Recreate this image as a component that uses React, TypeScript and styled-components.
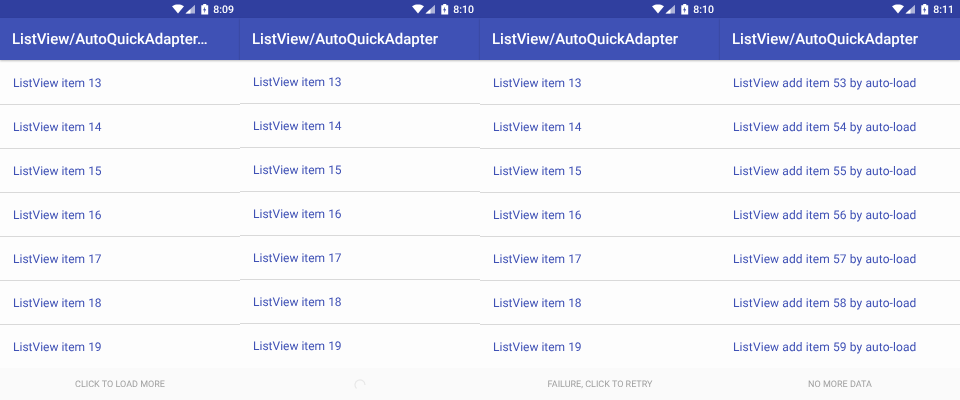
import React from "react";
import styled, { createGlobalStyle } from "styled-components";

const GlobalStyle = createGlobalStyle`
  html, body {
    margin: 0;
    padding: 0;
    background: #fafafa;
    font-family: Roboto, "Liberation Sans", sans-serif;
    text-rendering: geometricPrecision;
  }
`;

const Screens = styled.div`
  display: flex;
  width: 960px;
  height: 400px;
  overflow: hidden;
  will-change: transform;
`;

const Phone = styled.div`
  display: flex;
  flex-direction: column;
  width: 240px;
  height: 400px;
  background: #fdfdfd;
`;

const StatusBar = styled.div`
  display: flex;
  align-items: center;
  justify-content: flex-end;
  height: 18px;
  padding-right: 6px;
  box-sizing: border-box;
  background: #303f9f;
  color: #fff;
  font-size: 10.5px;
  font-weight: 500;
`;

const StatusIcons = styled.svg`
  width: 41px;
  height: 12px;
  margin-right: 1px;
  fill: #fff;
`;

const Toolbar = styled.div`
  display: flex;
  align-items: center;
  height: 42px;
  padding-left: 12px;
  flex-shrink: 0;
  position: relative;
  background: #3f51b5;
  color: #fff;
  font-size: 15px;
  font-weight: 500;
  box-shadow: 0 1px 2px rgba(0, 0, 0, 0.25);
  z-index: 1;
`;

const List = styled.div<{ $shift: number }>`
  display: flex;
  flex-direction: column;
  flex: 1;
  min-height: 0;
  overflow: hidden;
  padding-top: ${(p) => p.$shift}px;
`;

const Row = styled.div<{ $spacing: number }>`
  display: flex;
  flex-shrink: 0;
  align-items: center;
  height: 44px;
  box-sizing: border-box;
  padding-left: 13px;
  border-bottom: 1px solid #d9d9d9;
  color: #3f51b5;
  font-size: 12px;
  letter-spacing: ${(p) => p.$spacing}px;
  &:last-child {
    border-bottom: none;
  }
`;

const Footer = styled.div`
  display: flex;
  flex-shrink: 0;
  align-items: center;
  justify-content: center;
  height: 32px;
  padding-top: 1px;
  box-sizing: border-box;
  background: #fafafa;
  color: #a0a0a0;
  font-size: 9px;
`;

const Spinner = styled.svg`
  width: 12px;
  height: 12px;
  fill: none;
  stroke: #e8e8e8;
  stroke-width: 1.2;
`;

const StatusGlyphs = () => (
  <StatusIcons viewBox="0 0 41 12">
    <path d="M1 3.200C3 1.900 5 1.500 7 1.500s4 .4 6 1.700L7 10.500z" />
    <path d="M9.500 8.300h1l.8.9.8-.9h1l-1.300 1.400 1.300 1.400h-1l-.8-.9-.8.9h-1l1.300-1.400z" fill="#303f9f" />
    <path d="M14.500 10.500 24 1.700v8.800z" opacity="0.6" />
    <path d="M14.500 10.500 19.500 6v4.500z" />
    <path d="M30.300 2.200h1.900V1h3.100v1.200h1.900V11.500h-6.900z" />
    <path d="M34.100 3.400 32.100 7.200h1.400l-.5 3 2.100-3.900h-1.400z" fill="#303f9f" />
  </StatusIcons>
);

const phones = [
  { time: "8:09", title: "ListView/AutoQuickAdapter…", shift: 1, prefix: "ListView item ", suffix: "", start: 13, spacing: 0, footer: "CLICK TO LOAD MORE" },
  { time: "8:10", title: "ListView/AutoQuickAdapter", shift: 0, prefix: "ListView item ", suffix: "", start: 13, spacing: 0, footer: "" },
  { time: "8:10", title: "ListView/AutoQuickAdapter", shift: 1, prefix: "ListView item ", suffix: "", start: 13, spacing: 0, footer: "FAILURE, CLICK TO RETRY" },
  { time: "8:11", title: "ListView/AutoQuickAdapter", shift: 1, prefix: "ListView add item ", suffix: " by auto-load", start: 53, spacing: 0.1, footer: "NO MORE DATA" },
];

export default function App() {
  return (
    <Screens>
      <GlobalStyle />
      {phones.map((phone, i) => (
        <Phone key={i}>
          <StatusBar>
            <StatusGlyphs />
            {phone.time}
          </StatusBar>
          <Toolbar>{phone.title}</Toolbar>
          <List $shift={phone.shift}>
            {[0, 1, 2, 3, 4, 5, 6].map((n) => (
              <Row key={n} $spacing={phone.spacing}>
                {phone.prefix}
                {phone.start + n}
                {phone.suffix}
              </Row>
            ))}
          </List>
          <Footer>
            {phone.footer || (
              <Spinner viewBox="0 0 12 12">
                <path d="M2.500 9.500A5 5 0 1 1 11 6" />
              </Spinner>
            )}
          </Footer>
        </Phone>
      ))}
    </Screens>
  );
}
